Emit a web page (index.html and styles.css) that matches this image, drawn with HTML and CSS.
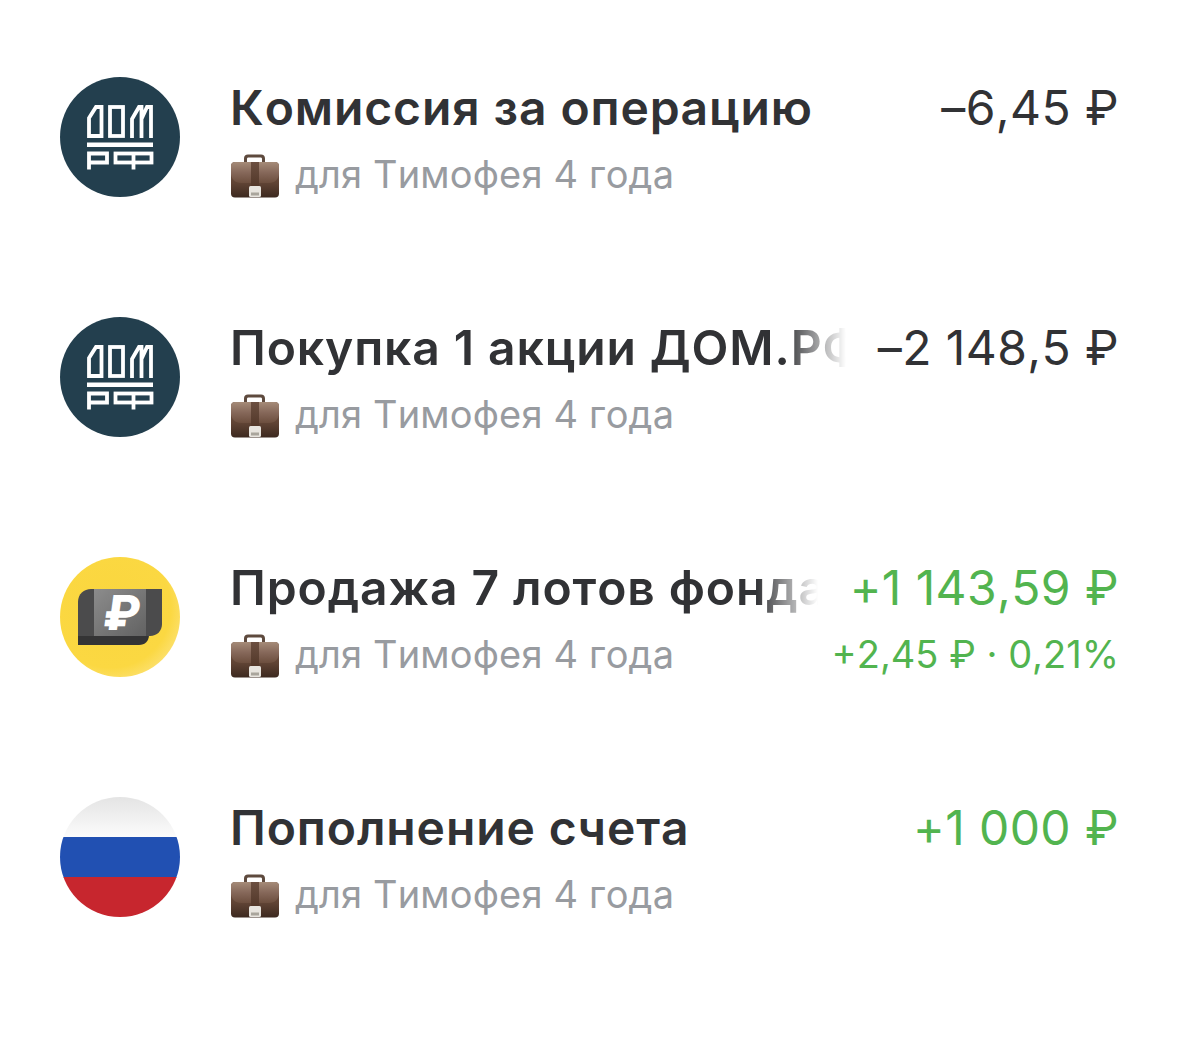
FILE: index.html
```html
<!DOCTYPE html>
<html lang="ru">
<head>
<meta charset="utf-8">
<title>Операции</title>
<link rel="stylesheet" href="styles.css">
</head>
<body>
<svg class="defs" width="0" height="0" aria-hidden="true">
  <defs>
    <linearGradient id="caseBody" x1="0" y1="0" x2="0" y2="1">
      <stop offset="0" stop-color="#76574a"/>
      <stop offset="0.6" stop-color="#5f4334"/>
      <stop offset="1" stop-color="#3c291f"/>
    </linearGradient>
    <linearGradient id="caseFlap" x1="0" y1="0" x2="0" y2="1">
      <stop offset="0" stop-color="#a58b78"/>
      <stop offset="0.5" stop-color="#86685a"/>
      <stop offset="1" stop-color="#6c4e3e"/>
    </linearGradient>
    <linearGradient id="caseStrap" x1="0" y1="0" x2="0" y2="1">
      <stop offset="0" stop-color="#6b4f40"/>
      <stop offset="1" stop-color="#523729"/>
    </linearGradient>
    <radialGradient id="yellowBg" cx="0.42" cy="0.42" r="0.72">
      <stop offset="0" stop-color="#fad63e"/>
      <stop offset="0.7" stop-color="#fbd842"/>
      <stop offset="1" stop-color="#fde68c"/>
    </radialGradient>
    <linearGradient id="flagWhite" x1="0" y1="0" x2="0" y2="1">
      <stop offset="0" stop-color="#e4e4e4"/>
      <stop offset="1" stop-color="#fcfcfc"/>
    </linearGradient>
    <linearGradient id="walletMid" x1="0" y1="0" x2="1" y2="1">
      <stop offset="0" stop-color="#8c8c8c"/>
      <stop offset="1" stop-color="#626262"/>
    </linearGradient>
    <symbol id="case" viewBox="0 0 50 44">
      <path d="M14 10V4.500C14 2 15.500 0.500 18 0.500H31C33.500 0.500 35 2 35 4.500V10H32V5C32 4 31.500 3.500 30.500 3.500H18.500C17.500 3.500 17 4 17 5V10Z" fill="#5e4a3e"/>
      <rect x="1" y="8" width="48" height="35.500" rx="4" fill="url(#caseBody)"/>
      <path d="M1 12C1 9.500 3 8 5 8H45C47 8 49 9.500 49 12V19C49 25 45 29 39 29H11C5 29 1 25 1 19Z" fill="url(#caseFlap)"/>
      <rect x="21" y="8" width="8" height="25" fill="url(#caseStrap)"/>
      <rect x="19" y="32" width="12" height="11" rx="1.500" fill="#e8e5df"/>
      <rect x="21" y="38.500" width="8" height="3" fill="#a9a59c"/>
    </symbol>
    <symbol id="domrf" viewBox="0 0 120 120">
      <circle cx="60" cy="60" r="60" fill="#233f4e"/>
      <g fill="none" stroke="#fff" stroke-width="3.800">
        <path d="M29 59V41L36 30H41.500V59Z"/>
        <rect x="50" y="30" width="13" height="29"/>
        <path d="M72 61V42L79 30H81.500V61M81.500 42L87 30H91V61"/>
        <path d="M29 92.500V76.500H47V85.500H29"/>
        <rect x="55.500" y="76.500" width="36" height="9"/>
        <path d="M73.500 75V92.500"/>
      </g>
      <rect x="27" y="65.500" width="66" height="4.500" fill="#fff"/>
    </symbol>
    <symbol id="fund" viewBox="0 0 120 120">
      <circle cx="60" cy="60" r="60" fill="url(#yellowBg)"/>
      <path d="M18 88V70H89V78C89 84 85 88 79 88Z" fill="#343435"/>
      <path d="M18 79V45C18 37 24 32 31 32H102V67C102 74 97 79 90 79Z" fill="#4b4b4c"/>
      <rect x="34" y="32" width="52" height="47" fill="url(#walletMid)"/>
      <text class="fund-sign" x="70" y="73" transform="skewX(-8)">₽</text>
    </symbol>
    <symbol id="flag" viewBox="0 0 120 120">
      <clipPath id="flagClip"><circle cx="60" cy="60" r="60"/></clipPath>
      <g clip-path="url(#flagClip)">
        <rect width="120" height="41" fill="url(#flagWhite)"/>
        <rect y="40" width="120" height="41" fill="#2150b2"/>
        <rect y="80" width="120" height="40" fill="#c7262e"/>
      </g>
    </symbol>
  </defs>
</svg>

<main class="list">
  <article class="row">
    <svg class="avatar"><use href="#domrf"/></svg>
    <div class="body">
      <div class="line">
        <div class="title">Комиссия за операцию</div>
        <div class="amount">–6,45 ₽</div>
      </div>
      <div class="line line-sub">
        <div class="account"><svg class="case"><use href="#case"/></svg><span>для Тимофея 4 года</span></div>
      </div>
    </div>
  </article>

  <article class="row">
    <svg class="avatar"><use href="#domrf"/></svg>
    <div class="body">
      <div class="line">
        <div class="title title-fade">Покупка 1 акции ДОМ.РФ</div>
        <div class="amount">–2 148,5 ₽</div>
      </div>
      <div class="line line-sub">
        <div class="account"><svg class="case"><use href="#case"/></svg><span>для Тимофея 4 года</span></div>
      </div>
    </div>
  </article>

  <article class="row">
    <svg class="avatar"><use href="#fund"/></svg>
    <div class="body">
      <div class="line">
        <div class="title title-fade">Продажа 7 лотов фонда</div>
        <div class="amount positive">+1 143,59 ₽</div>
      </div>
      <div class="line line-sub">
        <div class="account"><svg class="case"><use href="#case"/></svg><span>для Тимофея 4 года</span></div>
        <div class="delta positive">+2,45 ₽ · 0,21%</div>
      </div>
    </div>
  </article>

  <article class="row">
    <svg class="avatar"><use href="#flag"/></svg>
    <div class="body">
      <div class="line">
        <div class="title">Пополнение счета</div>
        <div class="amount positive">+1 000 ₽</div>
      </div>
      <div class="line line-sub">
        <div class="account"><svg class="case"><use href="#case"/></svg><span>для Тимофея 4 года</span></div>
      </div>
    </div>
  </article>
</main>
</body>
</html>
```
FILE: styles.css
```css
html, body {
  margin: 0;
  background: #fff;
}

body {
  font-family: Inter, "Noto Sans", "Liberation Sans", sans-serif;
  font-kerning: none;
  color: #313235;
  overflow: hidden;
}

.defs {
  display: block;
  height: 0;
}

.list {
  display: flex;
  flex-direction: column;
  padding: 77px 60px 0 60px;
}

.row {
  display: flex;
  align-items: flex-start;
  gap: 50px;
  height: 240px;
}

.avatar {
  flex: none;
  width: 120px;
  height: 120px;
}

.fund-sign {
  font-size: 48px;
  font-weight: 800;
  fill: #fff;
  text-anchor: middle;
}

.body {
  flex: 1;
  min-width: 0;
  display: flex;
  flex-direction: column;
}

.line {
  display: flex;
  align-items: center;
  justify-content: space-between;
  height: 62px;
}

.line-sub {
  height: 66px;
  margin-top: 2px;
}

.title {
  flex: 1;
  min-width: 0;
  font-size: 48px;
  font-weight: 600;
  letter-spacing: 0.9px;
  line-height: 62px;
  white-space: nowrap;
  overflow: hidden;
}

.title-fade {
  -webkit-mask-image: linear-gradient(to right, #000 calc(100% - 64px), transparent calc(100% - 2px));
  mask-image: linear-gradient(to right, #000 calc(100% - 64px), transparent calc(100% - 2px));
}

.amount {
  flex: none;
  margin-left: 30px;
  font-size: 48px;
  font-weight: 400;
  letter-spacing: 0.4px;
  line-height: 62px;
  white-space: nowrap;
}

.positive {
  color: #52b44f;
}

.account {
  display: flex;
  align-items: center;
  gap: 15px;
  font-size: 38px;
  letter-spacing: 0.15px;
  color: #989ba0;
  white-space: nowrap;
}

.case {
  flex: none;
  width: 50px;
  height: 44px;
  margin-top: 3px;
}

.delta {
  font-size: 38px;
  white-space: nowrap;
}
```
